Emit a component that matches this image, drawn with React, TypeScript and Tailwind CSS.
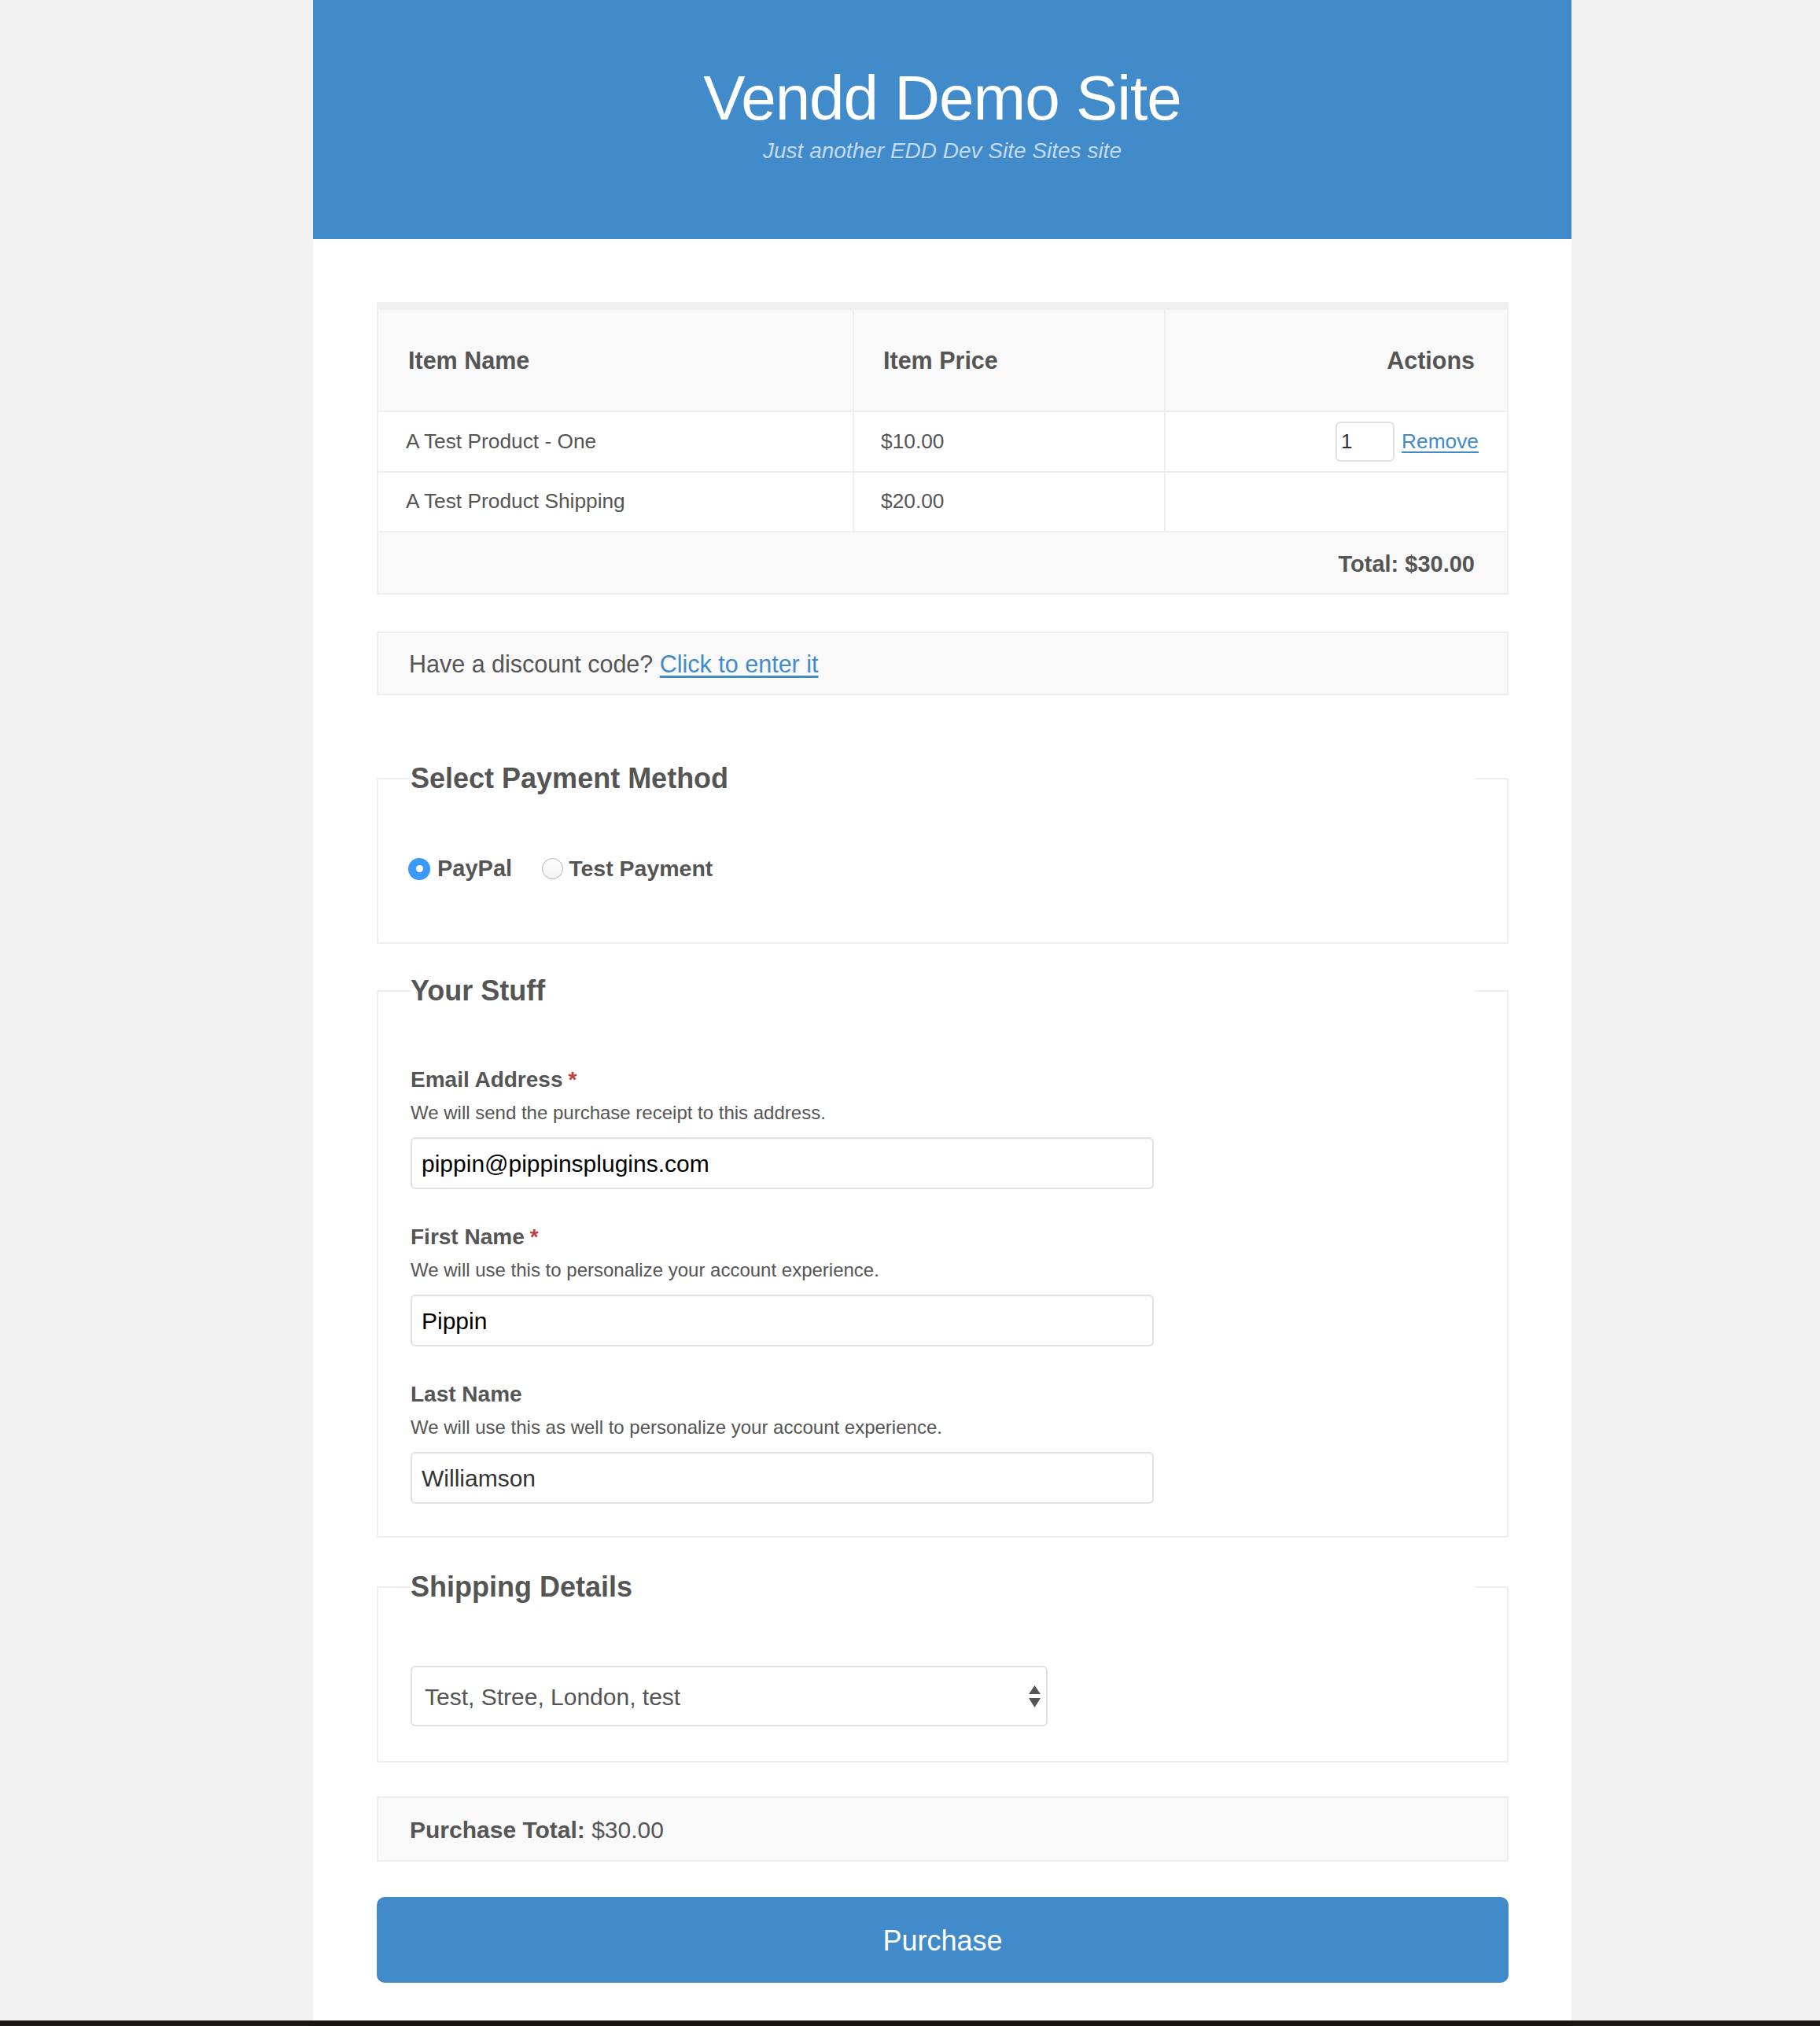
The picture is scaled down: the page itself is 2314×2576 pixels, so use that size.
import React from "react";

function Field({
  label,
  required,
  desc,
  value,
  valueClass,
  first,
}: {
  label: string;
  required?: boolean;
  desc: string;
  value: string;
  valueClass: string;
  first?: boolean;
}) {
  return (
    <div className={first ? "" : "mt-[44px]"}>
      <div className="text-[28px] leading-[34px] font-bold text-[#555]">
        {label}
        {required && <span className="ml-[7px] text-[#b8423f]">*</span>}
      </div>
      <div className="mt-[10px] text-[24px] leading-[30px] text-[#555]">{desc}</div>
      <div
        className={
          "mt-[16px] flex h-[66px] w-[945px] items-center rounded-[6px] border-2 border-[#e2e2e2] bg-white pl-[12px] text-[30px] shadow-[inset_0_1px_1px_rgba(0,0,0,0.04)] " +
          valueClass
        }
      >
        {value}
      </div>
    </div>
  );
}

export default function App() {
  return (
    <div className="min-h-screen bg-[#f1f1f1] font-['Liberation_Sans',Arial,sans-serif]">
      <div className="ml-[398px] w-[1600px] bg-white pb-[48px]">
        <header className="h-[304px] bg-[#428bca] pt-[85px] text-center">
          <h1 className="text-[80px] font-light leading-[80px] tracking-[-1px] text-white">
            Vendd Demo Site
          </h1>
          <p className="mt-[13px] text-[28px] italic leading-[28px] text-[#c3daf0]">
            Just another EDD Dev Site Sites site
          </p>
        </header>

        <main className="pl-[81px] pr-[80px] pt-[80px]">
          {/* Cart table */}
          <div className="border-2 border-t-[10px] border-[#eeeeee] border-t-[#efefef]">
            <div className="grid h-[130px] grid-cols-[603px_396px_1fr] border-b-2 border-[#eeeeee] bg-[#f9f9f9] text-[30.5px] font-bold text-[#555]">
              <div className="flex items-center pl-[38px] pt-[2px]">Item Name</div>
              <div className="flex items-center border-l-2 border-[#eeeeee] pl-[37px] pt-[2px]">Item Price</div>
              <div className="flex items-center justify-end border-l-2 border-[#eeeeee] pr-[41px] pt-[2px]">
                Actions
              </div>
            </div>
            <div className="grid h-[77px] grid-cols-[603px_396px_1fr] border-b-2 border-[#eeeeee] bg-white text-[26.3px] text-[#555]">
              <div className="flex items-center pl-[35px]">A Test Product - One</div>
              <div className="flex items-center border-l-2 border-[#eeeeee] pl-[34px]">$10.00</div>
              <div className="flex items-center justify-end gap-[9px] border-l-2 border-[#eeeeee] pr-[36px]">
                <div className="flex h-[51px] w-[75px] items-center rounded-[6px] border-2 border-[#e0e0e0] pl-[5px] text-[26px] text-[#333]">
                  1
                </div>
                <span className="text-[#428bca] underline underline-offset-[4px]">Remove</span>
              </div>
            </div>
            <div className="grid h-[76px] grid-cols-[603px_396px_1fr] border-b-2 border-[#eeeeee] bg-white text-[26.3px] text-[#555]">
              <div className="flex items-center pl-[35px]">A Test Product Shipping</div>
              <div className="flex items-center border-l-2 border-[#eeeeee] pl-[34px]">$20.00</div>
              <div className="border-l-2 border-[#eeeeee]" />
            </div>
            <div className="flex h-[77px] items-center justify-end bg-[#f9f9f9] pr-[41px] pt-[4px] text-[29px] font-bold text-[#555]">
              Total: $30.00
            </div>
          </div>

          {/* Discount */}
          <div className="mt-[47px] flex h-[81px] items-center border-2 border-[#eeeeee] bg-[#f9f9f9] pl-[39px] pt-[2px] text-[30.5px] text-[#555]">
            Have a discount code?&nbsp;
            <span className="text-[#428bca] underline underline-offset-[4px]">Click to enter it</span>
          </div>

          {/* Payment method */}
          <fieldset className="mt-[84px] border-2 border-[#eeeeee] px-[41px] pb-[77px]">
            <legend className="w-full text-[36px] font-bold leading-[43px] text-[#555]">
              Select Payment Method
            </legend>
            <div className="flex items-center pt-[77px]">
              <div className="ml-[-3px] flex h-[28px] w-[28px] items-center justify-center rounded-full bg-[#3b99fc]">
                <div className="h-[9px] w-[9px] rounded-full bg-white" />
              </div>
              <span className="ml-[9px] text-[29px] font-bold leading-[33px] text-[#555]">PayPal</span>
              <div className="ml-[38px] h-[27px] w-[27px] rounded-full border border-[#b0b0b0] bg-gradient-to-b from-white to-[#f2f2f2]" />
              <span className="ml-[7px] text-[28.5px] font-bold leading-[33px] text-[#555]">Test Payment</span>
            </div>
          </fieldset>

          {/* Your stuff */}
          <fieldset className="mt-[38px] border-2 border-[#eeeeee] px-[41px] pb-[41px]">
            <legend className="w-full text-[36px] font-bold leading-[43px] text-[#555]">Your Stuff</legend>
            <div className="pt-[75px]">
              <Field
                first
                label="Email Address"
                required
                desc="We will send the purchase receipt to this address."
                value="pippin@pippinsplugins.com"
                valueClass="text-black"
              />
              <Field
                label="First Name"
                required
                desc="We will use this to personalize your account experience."
                value="Pippin"
                valueClass="text-black"
              />
              <Field
                label="Last Name"
                desc="We will use this as well to personalize your account experience."
                value="Williamson"
                valueClass="text-[#333]"
              />
            </div>
          </fieldset>

          {/* Shipping */}
          <fieldset className="mt-[41px] border-2 border-[#eeeeee] px-[41px] pb-[44px]">
            <legend className="w-full text-[36px] font-bold leading-[43px] text-[#555]">Shipping Details</legend>
            <div className="pt-[79px]">
              <div className="flex h-[77px] w-[810px] items-center justify-between rounded-[6px] border-2 border-[#e2e2e2] bg-white pl-[16px] pr-[7px] text-[30px] text-[#555]">
                <span className="pt-[2px]">Test, Stree, London, test</span>
                <svg width="15" height="28" viewBox="0 0 15 28">
                  <polygon points="7.5,0 15,11 0,11" fill="#555" />
                  <polygon points="0,16 15,16 7.5,28" fill="#555" />
                </svg>
              </div>
            </div>
          </fieldset>

          {/* Purchase total */}
          <div className="mt-[43px] flex h-[83px] items-center border-2 border-[#eeeeee] bg-[#f9f9f9] pl-[40px] pt-[2px] text-[30px] text-[#555]">
            <span className="font-bold">Purchase Total:</span>&nbsp;$30.00
          </div>

          <div className="mt-[45px] flex h-[109px] w-full items-center justify-center rounded-[10px] bg-[#428bca] pt-[2px] text-[36px] text-white">
            Purchase
          </div>
        </main>
      </div>
      <div className="h-[60px] bg-[#1b1612]" />
    </div>
  );
}
